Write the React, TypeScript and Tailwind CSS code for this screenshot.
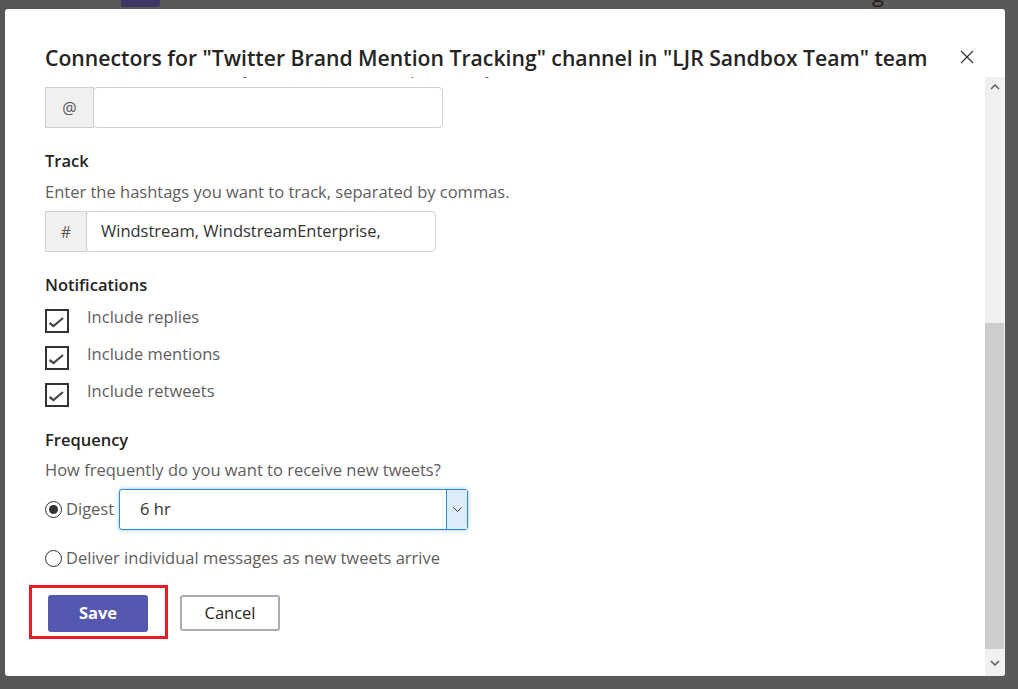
import React, { useLayoutEffect, useRef } from 'react';

const FONT = { fontFamily: '"Open Sans", "Noto Sans", sans-serif' };

// small check glyph used in the notification boxes
const Check = () => (
  <svg width="24" height="24" viewBox="0 0 24 24" className="block">
    <polyline points="4.5,14 8.5,17 18,9" fill="none" stroke="#4a4a4a" strokeWidth="2.2" />
  </svg>
);

const Chevron = ({ up = false }: { up?: boolean }) => (
  <svg width="10" height="6" viewBox="0 0 10 6" className="block">
    <polyline
      points={up ? '1,5 5,1 9,5' : '1,1 5,5 9,1'}
      fill="none"
      stroke="#606060"
      strokeWidth="1.6"
    />
  </svg>
);

const Label: React.FC<{ children: React.ReactNode }> = ({ children }) => (
  <div className="h-6 leading-6 text-[16.5px] font-semibold text-[#252423]">{children}</div>
);

const Hint: React.FC<{ children: React.ReactNode; className?: string }> = ({ children, className = '' }) => (
  <div className={`h-6 leading-6 text-[16.5px] text-[#5e5e5e] whitespace-nowrap ${className}`}>{children}</div>
);

const AddonInput: React.FC<{ addon: string; addonW: string; value?: string }> = ({ addon, addonW, value }) => (
  <div className="mt-[7px] flex h-[41px]">
    <div
      className={`${addonW} flex items-center justify-center bg-[#f0f0f0] border border-[#d0d0d0] text-[16px] text-[#555]`}
    >
      {addon}
    </div>
    <div className="w-[350px] flex items-center -ml-px border border-[#d0d0d0] rounded-[4px] bg-white pl-[14px] text-[16.5px] text-[#333]">
      {value}
    </div>
  </div>
);

const CheckRow: React.FC<{ label: string }> = ({ label }) => (
  <div className="flex items-start h-7">
    <div className="mt-1 w-6 h-6 border-2 border-[#333] bg-white flex items-center justify-center">
      <div className="-m-[2px]">
        <Check />
      </div>
    </div>
    <span className="ml-[18px] leading-6 text-[16.5px] text-[#5e5e5e]">{label}</span>
  </div>
);

export default function App() {
  const scrollRef = useRef<HTMLDivElement>(null);

  useLayoutEffect(() => {
    if (scrollRef.current) scrollRef.current.scrollTop = 52;
  }, []);

  return (
    <div className="relative w-full h-[689px] bg-[#5a5957] overflow-hidden" style={FONT}>
      {/* page behind the dialog */}
      <div className="absolute left-0 top-0 w-[80px] h-full bg-[#575654]" />
      <div className="absolute left-[121px] top-0 w-[39px] h-[7px] bg-[#3e3664] rounded-b-[3px]" />
      <span className="absolute left-[872px] -top-[19px] text-[22px] leading-6 text-[#222]">g</span>

      {/* dialog */}
      <div className="relative ml-[5px] mt-[9px] w-[1000px] h-[667px] bg-white rounded-[3px] flex flex-col overflow-hidden">
        <div className="h-[68px] shrink-0 flex items-start pl-[40px] pt-[35px]">
          <h1 className="text-[21.2px] leading-7 font-semibold text-[#252423] whitespace-nowrap">
            Connectors for "Twitter Brand Mention Tracking" channel in "LJR Sandbox Team" team
          </h1>
          <svg width="14" height="14" viewBox="0 0 14 14" className="absolute left-[955px] top-[41px]">
            <path d="M1 1 L13 13 M13 1 L1 13" stroke="#333" strokeWidth="1.2" />
          </svg>
        </div>

        <div className="flex flex-1 min-h-0">
          <div ref={scrollRef} className="flex-1 overflow-hidden pl-[40px]">
            {/* Follow */}
            <div className="flex flex-col">
              <Label>Follow</Label>
              <Hint className="mt-[7px]">Enter the Twitter handles you want to follow, separated by commas.</Hint>
              <AddonInput addon="@" addonW="w-[49px]" />
            </div>

            {/* Track */}
            <div className="mt-[21px] flex flex-col">
              <Label>Track</Label>
              <Hint className="mt-[7px]">Enter the hashtags you want to track, separated by commas.</Hint>
              <AddonInput addon="#" addonW="w-[42px]" value="Windstream, WindstreamEnterprise," />
            </div>

            {/* Notifications */}
            <div className="mt-[21px] flex flex-col">
              <Label>Notifications</Label>
              <div className="mt-2 flex flex-col gap-[9px]">
                <CheckRow label="Include replies" />
                <CheckRow label="Include mentions" />
                <CheckRow label="Include retweets" />
              </div>
            </div>

            {/* Frequency */}
            <div className="mt-[21px] flex flex-col">
              <Label>Frequency</Label>
              <Hint className="mt-[6px]">How frequently do you want to receive new tweets?</Hint>
              <div className="mt-[7px] flex items-center h-[41px]">
                <div className="w-[17px] h-[17px] rounded-full border-[1.5px] border-[#333] flex items-center justify-center">
                  <div className="w-[9px] h-[9px] rounded-full bg-[#333]" />
                </div>
                <span className="ml-[4px] text-[16.5px] text-[#5e5e5e]">Digest</span>
                <div className="ml-[5px] w-[349px] h-[41px] flex border border-[#2b88d8] rounded-[3px] shadow-[0_0_4px_rgba(43,136,216,0.45)] bg-white">
                  <div className="flex-1 flex items-center pl-[20px] text-[16.5px] text-[#333]">6 hr</div>
                  <div className="w-[21px] bg-[#deecf9] border-l border-[#2b88d8] flex items-center justify-center">
                    <svg width="9" height="5" viewBox="0 0 9 5">
                      <polyline points="0.5,0.5 4.5,4.5 8.5,0.5" fill="none" stroke="#333" strokeWidth="1" />
                    </svg>
                  </div>
                </div>
              </div>
              <div className="mt-4 flex items-center h-6">
                <div className="w-[17px] h-[17px] rounded-full border-[1.5px] border-[#333] bg-white" />
                <span className="ml-[4px] text-[16.5px] text-[#5e5e5e]">
                  Deliver individual messages as new tweets arrive
                </span>
              </div>
            </div>

            {/* Buttons */}
            <div className="mt-[25px] flex items-start gap-8 pl-[3px] pb-[120px]">
              <div className="relative">
                <button className="w-[100px] h-[37px] rounded-[3px] bg-[#5558af] text-white font-bold text-[16.5px]">
                  Save
                </button>
                <div className="absolute -left-[19px] -top-[10px] w-[139px] h-[54px] border-[3px] border-[#e81c24] pointer-events-none" />
              </div>
              <button className="w-[100px] h-[36px] rounded-[3px] border-2 border-[#a9acb3] bg-white text-[16.5px] text-[#252423]">
                Cancel
              </button>
            </div>
          </div>

          {/* scrollbar */}
          <div className="w-[20px] shrink-0 bg-[#f0f0f0] flex flex-col">
            <div className="h-[20px] flex items-center justify-center">
              <Chevron up />
            </div>
            <div className="h-[226px]" />
            <div className="h-[326px] mr-px bg-[#cdcdcd]" />
            <div className="flex-1 flex items-center justify-center">
              <Chevron />
            </div>
          </div>
        </div>
      </div>
    </div>
  );
}
